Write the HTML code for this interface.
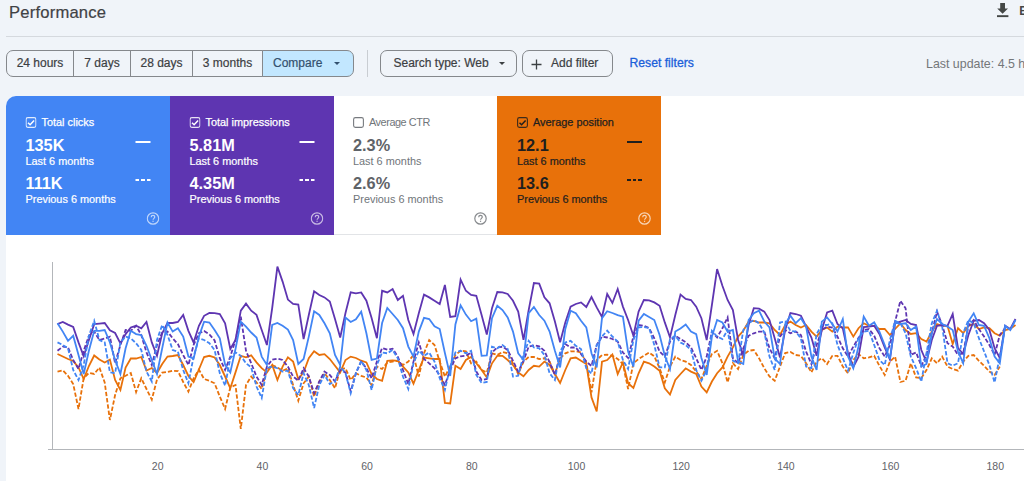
<!DOCTYPE html>
<html><head><meta charset="utf-8">
<style>
*{box-sizing:border-box;margin:0;padding:0}
html,body{width:1024px;height:481px;overflow:hidden;background:#f0f4f9;font-family:"Liberation Sans",sans-serif;color:#3c4043}
#root{position:relative;width:1024px;height:481px;overflow:hidden}
.title{position:absolute;left:9px;top:2px;font-size:16.6px;line-height:22px;color:#3f4245;letter-spacing:0.2px;-webkit-text-stroke:0.2px #3f4245}
.hr{position:absolute;left:6px;right:0;top:36px;height:1px;background:#d5d9de}
.exp{position:absolute;left:996px;top:2px}
.expt{position:absolute;left:1019.3px;top:4px;font-size:12px;line-height:14px;font-weight:bold;color:#444746}
.seg{position:absolute;top:50px;height:27px;border:1px solid #85888c;font-size:12px;line-height:25px;color:#3c4043;text-align:center;white-space:nowrap;-webkit-text-stroke:0.2px #3c4043}
.btn{position:absolute;top:50px;height:27px;border:1px solid #85888c;border-radius:7px;font-size:12px;line-height:25px;color:#3c4043;white-space:nowrap;-webkit-text-stroke:0.2px #3c4043}
.vsep{position:absolute;left:367px;top:50px;width:1px;height:27px;background:#c9cdd2}
.caret{position:absolute;top:11px;width:0;height:0;border-left:3.3px solid transparent;border-right:3.3px solid transparent;border-top:3.6px solid #3c4043}
.reset{position:absolute;left:629.5px;top:55px;font-size:12.2px;line-height:16px;color:#1b5fd9;-webkit-text-stroke:0.3px #1b5fd9}
.last{position:absolute;left:926px;top:56px;font-size:12.4px;line-height:16px;color:#747779;white-space:nowrap}
.panel{position:absolute;left:6px;top:96px;width:1030px;height:400px;background:#fff;border-radius:10px 0 0 0}
.card{position:absolute;top:96px;height:139px;color:#fff}
.card .lab{position:absolute;left:35px;top:20px;font-size:10.9px;line-height:13px;white-space:nowrap;-webkit-text-stroke:0.25px currentColor}
.card .cb{position:absolute;left:19px;top:21px;width:11px;height:11px}
.card .v1{position:absolute;left:19px;top:39px;font-size:16.3px;line-height:20px;font-weight:bold;white-space:nowrap}
.card .s1{position:absolute;left:19px;top:59px;font-size:10.9px;line-height:13px;white-space:nowrap;-webkit-text-stroke:0.2px currentColor}
.card .v2{position:absolute;left:19px;top:77px;font-size:16.3px;line-height:20px;font-weight:bold;white-space:nowrap}
.card .s2{position:absolute;left:19px;top:97px;font-size:10.9px;line-height:13px;white-space:nowrap;-webkit-text-stroke:0.2px currentColor}
.card .l1{position:absolute;left:128.5px;top:45.3px;width:15px;height:1.7px;background:currentColor}
.card .l2{position:absolute;left:128.5px;top:82.9px;width:15px;height:1.7px;background:linear-gradient(90deg,currentColor 0 3.6px,transparent 3.6px 5.7px,currentColor 5.7px 9.3px,transparent 9.3px 11.4px,currentColor 11.4px 15px)}
.card .q{position:absolute;left:140px;top:116px;width:13px;height:13px}
.sh1>*{transform:translateX(1px)}.sh05>*{transform:translateX(0.5px)}
.ctr .lab,.ctr .s1,.ctr .s2{color:#70757a;-webkit-text-stroke:0 transparent}.ctr .lab{letter-spacing:-0.45px}.ctr{border-bottom:1px solid #e2e4e7}
</style></head><body><div id="root">
<div class="title">Performance</div>
<svg class="exp" width="14" height="17" viewBox="0 0 14 17"><path d="M4.2 1h4.8v5.5h3l-5.4 5.2-5.4-5.2h3z" fill="#444746"/><rect x="1" y="13.2" width="11.4" height="1.9" fill="#444746"/></svg>
<div class="expt">E</div>
<div class="hr"></div>

<div class="seg" style="left:6px;width:68px;border-radius:7px 0 0 7px;">24 hours</div>
<div class="seg" style="left:73px;width:58px;">7 days</div>
<div class="seg" style="left:130px;width:63px;">28 days</div>
<div class="seg" style="left:192px;width:71px;">3 months</div>
<div class="seg" style="left:262px;width:92px;border-radius:0 7px 7px 0;background:#c2e7ff;color:#33506e;-webkit-text-stroke:0.2px #33506e;text-align:left;padding-left:10px;">Compare<span class="caret" style="left:70.5px;border-top-color:#33506e"></span></div>
<div class="vsep"></div>
<div class="btn" style="left:380px;width:137px;padding-left:12.5px;">Search type: Web<span class="caret" style="left:117.5px"></span></div>
<div class="btn" style="left:522px;width:91px;"><svg style="position:absolute;left:8px;top:7.5px" width="11" height="11" viewBox="0 0 11 11"><path d="M5.5 0.5v10M0.5 5.5h10" stroke="#3c4043" stroke-width="1.3" fill="none"/></svg><span style="position:absolute;left:28px;top:0">Add filter</span></div>
<div class="reset">Reset filters</div>
<div class="last">Last update: 4.5 hours ago</div>

<div class="panel"></div>
<div class="card sh05" style="left:6px;width:164px;background:#4285f4;color:#fff;border-radius:10px 0 0 0">
 <svg class="cb" viewBox="0 0 11 11"><rect x="0.6" y="0.6" width="9.8" height="9.8" rx="1.8" fill="none" stroke="#fff" stroke-width="1.1" stroke-opacity="0.85"/><path d="M2.5 5.7l2.1 2 4-4.3" fill="none" stroke="#fff" stroke-width="1.5"/></svg><div class="lab">Total clicks</div>
 <div class="v1">135K</div><div class="s1">Last 6 months</div><div class="l1"></div>
 <div class="v2">111K</div><div class="s2">Previous 6 months</div><div class="l2"></div>
 <svg class="q" viewBox="0 0 13 13" opacity="0.65"><circle cx="6.5" cy="6.5" r="5.7" fill="none" stroke="#fff" stroke-width="1.2"/><path d="M4.7 5.2c0-1.1 0.8-1.8 1.8-1.8s1.8 0.7 1.8 1.7c0 1.2-1.7 1.4-1.7 2.7" fill="none" stroke="#fff" stroke-width="1.2"/><rect x="5.95" y="8.7" width="1.2" height="1.2" fill="#fff"/></svg>
</div>
<div class="card sh05" style="left:170px;width:164px;background:#5e35b1;color:#fff;">
 <svg class="cb" viewBox="0 0 11 11"><rect x="0.6" y="0.6" width="9.8" height="9.8" rx="1.8" fill="none" stroke="#fff" stroke-width="1.1" stroke-opacity="0.85"/><path d="M2.5 5.7l2.1 2 4-4.3" fill="none" stroke="#fff" stroke-width="1.5"/></svg><div class="lab">Total impressions</div>
 <div class="v1">5.81M</div><div class="s1">Last 6 months</div><div class="l1"></div>
 <div class="v2">4.35M</div><div class="s2">Previous 6 months</div><div class="l2"></div>
 <svg class="q" viewBox="0 0 13 13" opacity="0.65"><circle cx="6.5" cy="6.5" r="5.7" fill="none" stroke="#fff" stroke-width="1.2"/><path d="M4.7 5.2c0-1.1 0.8-1.8 1.8-1.8s1.8 0.7 1.8 1.7c0 1.2-1.7 1.4-1.7 2.7" fill="none" stroke="#fff" stroke-width="1.2"/><rect x="5.95" y="8.7" width="1.2" height="1.2" fill="#fff"/></svg>
</div>
<div class="card ctr" style="left:334px;width:163px;background:#fff;color:#5f6368;">
 <svg class="cb" viewBox="0 0 11 11"><rect x="0.6" y="0.6" width="9.8" height="9.8" rx="1.8" fill="none" stroke="#5f6368" stroke-width="1.1" stroke-opacity="0.85"/></svg><div class="lab">Average CTR</div>
 <div class="v1">2.3%</div><div class="s1">Last 6 months</div>
 <div class="v2">2.6%</div><div class="s2">Previous 6 months</div>
 <svg class="q" viewBox="0 0 13 13" opacity="0.75"><circle cx="6.5" cy="6.5" r="5.7" fill="none" stroke="#5f6368" stroke-width="1.2"/><path d="M4.7 5.2c0-1.1 0.8-1.8 1.8-1.8s1.8 0.7 1.8 1.7c0 1.2-1.7 1.4-1.7 2.7" fill="none" stroke="#5f6368" stroke-width="1.2"/><rect x="5.95" y="8.7" width="1.2" height="1.2" fill="#5f6368"/></svg>
</div>
<div class="card sh1" style="left:497px;width:164px;background:#e8710a;color:#1f1f1f;">
 <svg class="cb" viewBox="0 0 11 11"><rect x="0.6" y="0.6" width="9.8" height="9.8" rx="1.8" fill="none" stroke="#1f1f1f" stroke-width="1.1" stroke-opacity="0.85"/><path d="M2.5 5.7l2.1 2 4-4.3" fill="none" stroke="#1f1f1f" stroke-width="1.5"/></svg><div class="lab">Average position</div>
 <div class="v1">12.1</div><div class="s1">Last 6 months</div><div class="l1"></div>
 <div class="v2">13.6</div><div class="s2">Previous 6 months</div><div class="l2"></div>
 <svg class="q" viewBox="0 0 13 13" opacity="0.7"><circle cx="6.5" cy="6.5" r="5.7" fill="none" stroke="#fff" stroke-width="1.2"/><path d="M4.7 5.2c0-1.1 0.8-1.8 1.8-1.8s1.8 0.7 1.8 1.7c0 1.2-1.7 1.4-1.7 2.7" fill="none" stroke="#fff" stroke-width="1.2"/><rect x="5.95" y="8.7" width="1.2" height="1.2" fill="#fff"/></svg>
</div>

<!--CHART-->
<svg style="position:absolute;left:0;top:240px" width="1024" height="241" viewBox="0 240 1024 241">
<line x1="52.5" y1="262" x2="52.5" y2="449.5" stroke="#b3b6ba" stroke-width="1"/>
<line x1="48" y1="449.5" x2="1024" y2="449.5" stroke="#b3b6ba" stroke-width="1"/>
<polyline points="57.5,371.6 62.8,370.3 68.0,375.8 73.2,384.0 78.5,409.0 83.7,378.0 88.9,373.0 94.2,374.0 99.4,367.5 104.7,382.5 109.9,420.0 115.1,395.0 120.4,378.3 125.6,375.8 130.8,373.0 136.1,392.0 141.3,378.3 146.5,389.0 151.8,399.6 157.0,379.5 162.2,372.7 167.5,372.0 172.7,370.7 177.9,371.0 183.2,382.0 188.4,391.6 193.6,378.3 198.9,369.6 204.1,379.0 209.4,380.8 214.6,383.3 219.8,396.6 225.1,409.0 230.3,387.4 235.5,385.0 240.8,429.0 246.0,385.0 251.2,376.6 256.5,382.4 261.7,389.0 266.9,370.0 272.2,365.0 277.4,367.5 282.6,370.8 287.9,368.3 293.1,385.0 298.3,400.7 303.6,383.3 308.8,376.6 314.1,396.6 319.3,381.6 324.5,373.3 329.8,380.0 335.0,388.3 340.2,369.0 345.5,368.3 350.7,380.0 355.9,373.3 361.2,375.8 366.4,377.5 371.6,385.0 376.9,366.6 382.1,369.0 387.3,362.5 392.6,361.6 397.8,360.8 403.0,365.0 408.3,361.6 413.5,355.0 418.8,376.6 424.0,353.3 429.2,340.0 434.5,345.0 439.7,361.6 444.9,376.6 450.2,366.6 455.4,355.0 460.6,350.8 465.9,351.3 471.1,363.3 476.3,361.6 481.6,370.0 486.8,372.5 492.0,353.3 497.3,355.0 502.5,352.0 507.7,353.3 513.0,363.3 518.2,374.0 523.5,361.6 528.7,357.0 533.9,357.0 539.2,359.0 544.4,358.3 549.6,361.6 554.9,374.0 560.1,358.3 565.3,353.3 570.6,351.3 575.8,351.3 581.0,352.5 586.3,362.5 591.5,392.4 596.7,360.0 602.0,355.0 607.2,354.6 612.4,355.8 617.7,359.0 622.9,364.0 628.1,389.0 633.4,363.3 638.6,359.0 643.9,355.8 649.1,352.5 654.3,356.3 659.6,368.3 664.8,382.4 670.0,366.6 675.3,356.6 680.5,360.0 685.7,361.6 691.0,365.0 696.2,371.5 701.4,379.0 706.7,365.7 711.9,354.0 717.1,350.8 722.4,363.2 727.6,382.4 732.9,363.2 738.1,369.0 743.3,355.0 748.6,350.8 753.8,350.0 759.0,358.2 764.3,368.2 769.5,376.5 774.7,380.7 780.0,366.6 785.2,353.0 790.4,352.0 795.7,355.0 800.9,355.8 806.1,363.2 811.4,372.4 816.6,361.6 821.8,358.2 827.1,364.0 832.3,355.8 837.5,355.8 842.8,366.6 848.0,373.2 853.3,360.0 858.5,354.0 863.7,358.3 869.0,357.4 874.2,355.8 879.4,365.8 884.7,375.0 889.9,361.6 895.1,356.6 900.4,382.0 905.6,380.7 910.8,363.3 916.1,377.4 921.3,378.2 926.5,370.0 931.8,358.3 937.0,363.3 942.2,356.6 947.5,366.6 952.7,369.0 958.0,370.7 963.2,361.6 968.4,355.8 973.7,355.0 978.9,360.8 984.1,365.8 989.4,371.6 994.6,375.0 999.8,366.6" fill="none" stroke="#e8710a" stroke-width="1.8" stroke-linejoin="miter" stroke-dasharray="4.3,2"/>
<polyline points="57.5,354.0 62.8,356.5 68.0,359.0 73.2,361.0 78.5,367.5 83.7,379.0 88.9,366.0 94.2,355.5 99.4,359.5 104.7,362.5 109.9,359.5 115.1,380.0 120.4,390.0 125.6,367.5 130.8,358.5 136.1,358.5 141.3,357.0 146.5,370.5 151.8,368.0 157.0,373.0 162.2,364.0 167.5,356.5 172.7,356.0 177.9,355.0 183.2,365.0 188.4,376.0 193.6,382.0 198.9,369.5 204.1,357.0 209.4,355.8 214.6,357.4 219.8,365.0 225.1,376.5 230.3,388.2 235.5,372.4 240.8,355.8 246.0,357.4 251.2,355.3 256.5,362.4 261.7,368.2 266.9,372.4 272.2,365.0 277.4,380.0 282.6,366.6 287.9,357.4 293.1,361.6 298.3,379.0 303.6,372.4 308.8,358.2 314.1,351.3 319.3,355.0 324.5,354.1 329.8,359.0 335.0,365.7 340.2,372.4 345.5,360.0 350.7,356.6 355.9,358.0 361.2,360.7 366.4,362.4 371.6,374.0 376.9,379.0 382.1,380.8 387.3,360.8 392.6,360.3 397.8,360.8 403.0,366.6 408.3,372.4 413.5,383.6 418.8,370.0 424.0,357.5 429.2,358.3 434.5,359.0 439.7,359.0 444.9,402.9 450.2,403.5 455.4,365.8 460.6,369.0 465.9,360.0 471.1,357.0 476.3,363.3 481.6,370.0 486.8,377.4 492.0,363.3 497.3,355.8 502.5,355.8 507.7,360.0 513.0,365.0 518.2,372.4 523.5,376.3 528.7,370.0 533.9,365.8 539.2,366.6 544.4,361.6 549.6,365.0 554.9,374.0 560.1,383.0 565.3,370.0 570.6,358.3 575.8,357.5 581.0,360.8 586.3,364.0 591.5,397.4 596.7,411.5 602.0,361.6 607.2,360.0 612.4,354.6 617.7,374.0 622.9,362.5 628.1,383.2 633.4,388.0 638.6,373.3 643.9,361.6 649.1,363.3 654.3,366.6 659.6,370.8 664.8,388.2 670.0,394.5 675.3,380.0 680.5,374.0 685.7,368.3 691.0,371.6 696.2,374.0 701.4,386.5 706.7,392.4 711.9,381.5 717.1,373.2 722.4,367.4 727.6,356.6 732.9,347.4 738.1,336.6 743.3,330.8 748.6,321.6 753.8,320.8 759.0,322.5 764.3,322.5 769.5,323.3 774.7,330.0 780.0,335.0 785.2,325.0 790.4,321.6 795.7,325.0 800.9,327.5 806.1,325.0 811.4,331.6 816.6,336.6 821.8,330.0 827.1,327.5 832.3,331.6 837.5,326.6 842.8,327.5 848.0,327.4 853.3,336.6 858.5,328.2 863.7,323.3 869.0,325.8 874.2,325.8 879.4,329.0 884.7,329.0 889.9,335.0 895.1,329.0 900.4,323.3 905.6,330.0 910.8,334.0 916.1,333.2 921.3,339.0 926.5,341.6 931.8,331.6 937.0,324.0 942.2,325.8 947.5,325.8 952.7,344.0 958.0,328.2 963.2,333.2 968.4,325.8 973.7,324.0 978.9,329.0 984.1,327.4 989.4,328.2 994.6,333.2 999.8,335.7 1005.1,330.0 1010.3,329.0 1015.5,325.0" fill="none" stroke="#e8710a" stroke-width="1.8" stroke-linejoin="miter"/>
<polyline points="57.5,350.8 62.8,346.6 68.0,347.4 73.2,360.0 78.5,369.0 83.7,350.8 88.9,335.8 94.2,331.6 99.4,340.0 104.7,338.6 109.9,336.6 115.1,363.2 120.4,345.0 125.6,330.0 130.8,330.8 136.1,325.8 141.3,335.0 146.5,352.4 151.8,365.0 157.0,345.0 162.2,332.5 167.5,331.6 172.7,338.3 177.9,344.1 183.2,355.0 188.4,365.0 193.6,345.0 198.9,333.3 204.1,331.0 209.4,334.5 214.6,340.5 219.8,358.2 225.1,370.0 230.3,356.6 235.5,340.0 240.8,316.7 246.0,350.8 251.2,363.2 256.5,376.5 261.7,385.0 266.9,366.6 272.2,359.6 277.4,358.6 282.6,360.0 287.9,366.6 293.1,376.5 298.3,380.7 303.6,368.2 308.8,376.5 314.1,393.2 319.3,381.5 324.5,371.6 329.8,375.0 335.0,381.5 340.2,370.0 345.5,372.4 350.7,391.5 355.9,373.2 361.2,361.6 366.4,368.2 371.6,378.3 376.9,361.6 382.1,348.0 387.3,349.7 392.6,348.7 397.8,356.6 403.0,370.0 408.3,384.0 413.5,361.6 418.8,342.4 424.0,359.0 429.2,363.3 434.5,368.3 439.7,375.0 444.9,385.0 450.2,370.0 455.4,358.3 460.6,356.3 465.9,355.8 471.1,352.5 476.3,371.6 481.6,380.0 486.8,379.0 492.0,352.5 497.3,347.5 502.5,346.7 507.7,350.0 513.0,360.8 518.2,371.6 523.5,360.8 528.7,346.6 533.9,345.3 539.2,346.3 544.4,350.8 549.6,362.4 554.9,375.0 560.1,355.0 565.3,344.0 570.6,347.5 575.8,347.5 581.0,354.0 586.3,361.6 591.5,366.0 596.7,345.0 602.0,336.6 607.2,337.5 612.4,339.0 617.7,341.6 622.9,352.5 628.1,358.0 633.4,336.5 638.6,325.0 643.9,325.7 649.1,328.2 654.3,338.3 659.6,351.6 664.8,356.6 670.0,341.6 675.3,335.7 680.5,339.0 685.7,342.3 691.0,347.4 696.2,358.2 701.4,370.0 706.7,356.6 711.9,331.6 717.1,337.4 722.4,328.3 727.6,317.4 732.9,358.2 738.1,363.2 743.3,348.3 748.6,335.8 753.8,333.3 759.0,331.6 764.3,331.6 769.5,348.3 774.7,358.2 780.0,336.6 785.2,330.0 790.4,333.3 795.7,331.6 800.9,335.0 806.1,351.6 811.4,364.0 816.6,345.0 821.8,330.0 827.1,326.6 832.3,327.5 837.5,336.6 842.8,348.3 848.0,356.6 853.3,346.6 858.5,338.0 863.7,330.0 869.0,329.0 874.2,335.8 879.4,348.2 884.7,356.5 889.9,345.0 895.1,321.6 900.4,300.8 905.6,308.3 910.8,354.9 916.1,352.4 921.3,366.0 926.5,355.0 931.8,333.2 937.0,311.6 942.2,325.0 947.5,343.2 952.7,346.6 958.0,354.9 963.2,353.2 968.4,325.8 973.7,320.0 978.9,329.0 984.1,336.6 989.4,345.0 994.6,354.9 999.8,335.0 1005.1,328.2" fill="none" stroke="#5e35b1" stroke-width="1.8" stroke-linejoin="miter" stroke-dasharray="4.3,2"/>
<polyline points="57.5,324.1 62.8,322.0 68.0,324.6 73.2,327.0 78.5,342.4 83.7,356.3 88.9,340.0 94.2,324.1 99.4,323.6 104.7,323.0 109.9,330.3 115.1,333.0 120.4,343.3 125.6,334.1 130.8,327.5 136.1,325.8 141.3,328.3 146.5,322.0 151.8,342.4 157.0,355.8 162.2,333.3 167.5,323.0 172.7,323.0 177.9,322.0 183.2,315.0 188.4,330.8 193.6,342.4 198.9,325.8 204.1,315.8 209.4,312.9 214.6,313.2 219.8,314.0 225.1,323.2 230.3,349.0 235.5,340.0 240.8,310.7 246.0,303.6 251.2,310.7 256.5,314.9 261.7,330.0 266.9,345.0 272.2,308.0 277.4,266.6 282.6,281.6 287.9,299.6 293.1,304.0 298.3,304.6 303.6,339.0 308.8,315.0 314.1,291.3 319.3,295.0 324.5,297.4 329.8,301.6 335.0,319.0 340.2,337.5 345.5,313.0 350.7,292.4 355.9,293.3 361.2,292.4 366.4,300.7 371.6,318.0 376.9,338.2 382.1,290.8 387.3,292.4 392.6,289.1 397.8,300.0 403.0,295.8 408.3,320.0 413.5,334.0 418.8,313.2 424.0,294.6 429.2,297.4 434.5,300.8 439.7,304.0 444.9,285.0 450.2,317.0 455.4,316.2 460.6,279.6 465.9,290.8 471.1,295.0 476.3,295.8 481.6,315.0 486.8,334.5 492.0,308.2 497.3,292.0 502.5,292.4 507.7,294.0 513.0,300.8 518.2,311.6 523.5,339.8 528.7,310.0 533.9,283.0 539.2,283.6 544.4,297.4 549.6,303.3 554.9,321.6 560.1,342.3 565.3,322.4 570.6,306.6 575.8,304.0 581.0,302.4 586.3,307.0 591.5,297.0 596.7,307.4 602.0,317.0 607.2,294.0 612.4,303.0 617.7,289.0 622.9,306.6 628.1,320.0 633.4,335.7 638.6,311.6 643.9,300.0 649.1,300.3 654.3,302.4 659.6,305.8 664.8,322.4 670.0,337.4 675.3,315.0 680.5,294.6 685.7,299.0 691.0,300.0 696.2,306.6 701.4,318.2 706.7,340.0 711.9,305.0 717.1,269.1 722.4,285.8 727.6,300.0 732.9,310.0 738.1,340.0 743.3,355.0 748.6,325.0 753.8,308.2 759.0,308.6 764.3,311.6 769.5,320.0 774.7,338.2 780.0,357.4 785.2,330.0 790.4,313.0 795.7,314.0 800.9,315.7 806.1,326.5 811.4,337.5 816.6,355.7 821.8,330.0 827.1,312.4 832.3,310.7 837.5,324.0 842.8,328.2 848.0,353.0 853.3,367.0 858.5,357.0 863.7,327.0 869.0,326.6 874.2,325.8 879.4,334.0 884.7,347.4 889.9,359.5 895.1,323.3 900.4,321.6 905.6,320.0 910.8,324.0 916.1,325.0 921.3,350.0 926.5,362.0 931.8,340.0 937.0,325.8 942.2,325.0 947.5,325.8 952.7,314.0 958.0,348.2 963.2,354.0 968.4,335.0 973.7,320.8 978.9,320.0 984.1,323.3 989.4,330.0 994.6,348.2 999.8,358.0 1005.1,325.8 1010.3,329.0 1015.5,319.0" fill="none" stroke="#5e35b1" stroke-width="1.8" stroke-linejoin="miter"/>
<polyline points="57.5,342.4 62.8,345.0 68.0,348.3 73.2,370.0 78.5,380.0 83.7,365.0 88.9,335.8 94.2,320.8 99.4,340.0 104.7,342.4 109.9,372.4 115.1,373.2 120.4,342.4 125.6,336.6 130.8,338.3 136.1,343.3 141.3,350.0 146.5,371.6 151.8,381.5 157.0,340.0 162.2,325.0 167.5,335.0 172.7,350.0 177.9,351.6 183.2,370.0 188.4,383.2 193.6,356.6 198.9,338.3 204.1,340.0 209.4,343.3 214.6,350.0 219.8,373.2 225.1,385.7 230.3,358.2 235.5,352.4 240.8,355.8 246.0,363.2 251.2,367.4 256.5,386.5 261.7,398.0 266.9,368.2 272.2,366.6 277.4,368.2 282.6,371.6 287.9,370.7 293.1,388.2 298.3,395.0 303.6,373.2 308.8,385.0 314.1,408.0 319.3,385.0 324.5,375.0 329.8,384.0 335.0,381.5 340.2,366.6 345.5,373.2 350.7,393.2 355.9,373.2 361.2,360.7 366.4,370.0 371.6,390.0 376.9,365.0 382.1,352.5 387.3,353.3 392.6,350.0 397.8,358.3 403.0,376.6 408.3,389.0 413.5,363.3 418.8,350.8 424.0,355.8 429.2,352.5 434.5,361.6 439.7,378.3 444.9,390.0 450.2,366.6 455.4,352.5 460.6,350.8 465.9,353.3 471.1,350.8 476.3,375.0 481.6,383.0 486.8,382.0 492.0,346.7 497.3,348.3 502.5,345.0 507.7,349.0 513.0,376.6 518.2,375.8 523.5,355.0 528.7,340.8 533.9,347.5 539.2,348.3 544.4,355.0 549.6,373.3 554.9,380.0 560.1,351.6 565.3,342.5 570.6,340.8 575.8,345.8 581.0,349.0 586.3,368.3 591.5,373.6 596.7,345.0 602.0,336.5 607.2,330.7 612.4,336.5 617.7,341.5 622.9,360.0 628.1,369.0 633.4,340.0 638.6,327.4 643.9,327.0 649.1,328.0 654.3,345.0 659.6,367.4 664.8,367.4 670.0,339.0 675.3,335.8 680.5,342.5 685.7,345.0 691.0,350.0 696.2,370.0 701.4,380.7 706.7,370.0 711.9,330.8 717.1,336.6 722.4,339.0 727.6,330.0 732.9,360.7 738.1,363.2 743.3,330.0 748.6,323.3 753.8,320.0 759.0,323.3 764.3,332.5 769.5,356.6 774.7,370.0 780.0,322.5 785.2,321.6 790.4,330.8 795.7,331.6 800.9,338.3 806.1,366.6 811.4,368.2 816.6,334.0 821.8,325.0 827.1,325.0 832.3,323.3 837.5,345.0 842.8,358.2 848.0,370.7 853.3,353.0 858.5,338.2 863.7,331.6 869.0,330.8 874.2,345.0 879.4,360.0 884.7,365.0 889.9,340.0 895.1,320.8 900.4,323.3 905.6,333.2 910.8,356.5 916.1,368.2 921.3,381.6 926.5,353.0 931.8,323.3 937.0,310.8 942.2,326.6 947.5,363.2 952.7,365.7 958.0,363.2 963.2,333.2 968.4,320.0 973.7,323.3 978.9,338.2 984.1,351.5 989.4,365.0 994.6,382.4 999.8,356.5 1005.1,326.6" fill="none" stroke="#4285f4" stroke-width="1.8" stroke-linejoin="miter" stroke-dasharray="4.3,2"/>
<polyline points="57.5,323.3 62.8,331.6 68.0,340.8 73.2,335.8 78.5,355.0 83.7,374.0 88.9,350.8 94.2,330.8 99.4,330.8 104.7,330.0 109.9,342.4 115.1,360.0 120.4,374.0 125.6,348.3 130.8,330.8 136.1,334.1 141.3,335.0 146.5,345.8 151.8,360.0 157.0,374.0 162.2,348.3 167.5,322.5 172.7,331.6 177.9,328.3 183.2,336.6 188.4,356.6 193.6,358.6 198.9,336.6 204.1,321.7 209.4,322.5 214.6,330.0 219.8,338.3 225.1,364.6 230.3,372.4 235.5,349.0 240.8,321.7 246.0,326.6 251.2,332.5 256.5,337.5 261.7,356.6 266.9,365.0 272.2,325.0 277.4,323.0 282.6,325.8 287.9,329.6 293.1,340.0 298.3,364.0 303.6,359.0 308.8,336.6 314.1,311.3 319.3,315.0 324.5,323.3 329.8,333.3 335.0,355.0 340.2,365.0 345.5,317.5 350.7,322.0 355.9,319.2 361.2,311.7 366.4,333.3 371.6,359.9 376.9,358.6 382.1,323.0 387.3,307.9 392.6,314.0 397.8,320.0 403.0,328.2 408.3,346.6 413.5,356.6 418.8,331.6 424.0,317.9 429.2,319.0 434.5,326.2 439.7,329.0 444.9,353.0 450.2,376.0 455.4,324.5 460.6,305.4 465.9,314.6 471.1,321.2 476.3,318.6 481.6,355.8 486.8,355.3 492.0,318.2 497.3,305.8 502.5,310.0 507.7,317.4 513.0,331.6 518.2,353.3 523.5,360.0 528.7,313.2 533.9,307.0 539.2,315.0 544.4,320.7 549.6,331.5 554.9,350.8 560.1,367.4 565.3,329.0 570.6,310.7 575.8,313.2 581.0,320.7 586.3,327.4 591.5,353.3 596.7,367.4 602.0,318.2 607.2,311.2 612.4,313.0 617.7,315.2 622.9,316.6 628.1,351.6 633.4,366.6 638.6,320.7 643.9,314.0 649.1,317.0 654.3,320.0 659.6,335.0 664.8,355.8 670.0,369.0 675.3,331.5 680.5,328.5 685.7,324.5 691.0,331.6 696.2,334.1 701.4,358.0 706.7,375.0 711.9,336.6 717.1,320.0 722.4,322.5 727.6,331.6 732.9,330.0 738.1,361.6 743.3,364.0 748.6,320.0 753.8,313.2 759.0,310.7 764.3,321.5 769.5,327.4 774.7,358.3 780.0,364.0 785.2,324.0 790.4,315.7 795.7,323.2 800.9,318.2 806.1,326.6 811.4,356.6 816.6,370.0 821.8,321.6 827.1,317.4 832.3,324.0 837.5,331.5 842.8,319.0 848.0,356.5 853.3,368.2 858.5,346.5 863.7,316.6 869.0,325.8 874.2,322.4 879.4,331.6 884.7,345.0 889.9,359.0 895.1,322.4 900.4,324.0 905.6,323.3 910.8,330.0 916.1,326.6 921.3,366.5 926.5,364.0 931.8,333.2 937.0,319.0 942.2,324.0 947.5,326.6 952.7,330.0 958.0,351.5 963.2,363.2 968.4,321.6 973.7,313.3 978.9,325.0 984.1,325.8 989.4,338.2 994.6,356.5 999.8,363.2 1005.1,325.8 1010.3,330.0 1015.5,320.0" fill="none" stroke="#4285f4" stroke-width="1.8" stroke-linejoin="miter"/>
<text x="157.7" y="470" font-size="10.5" fill="#5f6368" text-anchor="middle" font-family="Liberation Sans, sans-serif">20</text>
<text x="262.4" y="470" font-size="10.5" fill="#5f6368" text-anchor="middle" font-family="Liberation Sans, sans-serif">40</text>
<text x="367.1" y="470" font-size="10.5" fill="#5f6368" text-anchor="middle" font-family="Liberation Sans, sans-serif">60</text>
<text x="471.8" y="470" font-size="10.5" fill="#5f6368" text-anchor="middle" font-family="Liberation Sans, sans-serif">80</text>
<text x="576.5" y="470" font-size="10.5" fill="#5f6368" text-anchor="middle" font-family="Liberation Sans, sans-serif">100</text>
<text x="681.2" y="470" font-size="10.5" fill="#5f6368" text-anchor="middle" font-family="Liberation Sans, sans-serif">120</text>
<text x="785.9" y="470" font-size="10.5" fill="#5f6368" text-anchor="middle" font-family="Liberation Sans, sans-serif">140</text>
<text x="890.6" y="470" font-size="10.5" fill="#5f6368" text-anchor="middle" font-family="Liberation Sans, sans-serif">160</text>
<text x="995.3" y="470" font-size="10.5" fill="#5f6368" text-anchor="middle" font-family="Liberation Sans, sans-serif">180</text>
</svg>
<!--/CHART-->
</div></body></html>
